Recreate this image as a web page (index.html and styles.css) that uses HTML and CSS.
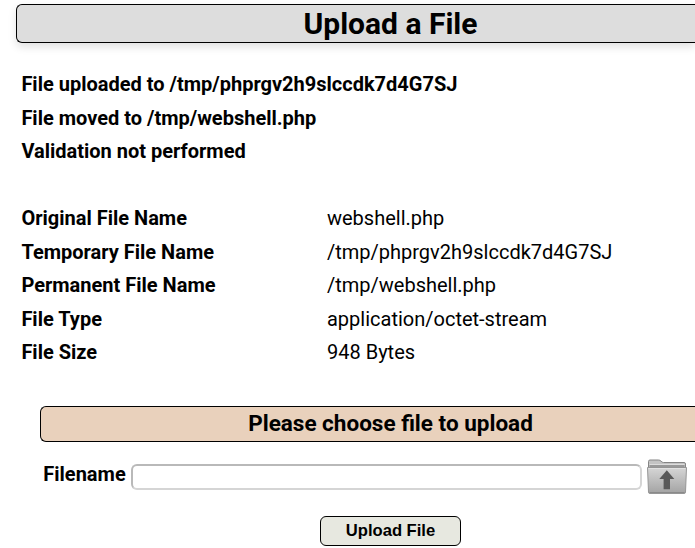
FILE: index.html
```html
<!DOCTYPE html>
<html lang="en">
<head>
<meta charset="utf-8">
<title>Upload a File</title>
<link rel="stylesheet" href="styles.css">
</head>
<body>
<main class="page">
  <h1 class="page-title">Upload a File</h1>
  <section class="messages">
    <p>File uploaded to /tmp/phprgv2h9slccdk7d4G7SJ</p>
    <p>File moved to /tmp/webshell.php</p>
    <p>Validation not performed</p>
  </section>
  <dl class="details">
    <dt>Original File Name</dt><dd>webshell.php</dd>
    <dt>Temporary File Name</dt><dd>/tmp/phprgv2h9slccdk7d4G7SJ</dd>
    <dt>Permanent File Name</dt><dd>/tmp/webshell.php</dd>
    <dt>File Type</dt><dd>application/octet-stream</dd>
    <dt>File Size</dt><dd>948 Bytes</dd>
  </dl>
  <form class="upload">
    <h2 class="form-title">Please choose file to upload</h2>
    <div class="file-row">
      <label for="filename">Filename</label>
      <input id="filename" class="filename" type="text">
      <svg class="folder" viewBox="0 0 42 38" aria-hidden="true">
        <defs>
          <linearGradient id="front" x1="0" y1="0" x2="0" y2="1">
            <stop offset="0" stop-color="#d6d6d6"/>
            <stop offset="1" stop-color="#a3a3a3"/>
          </linearGradient>
        </defs>
        <path d="M2.500 10V3.500Q2.500 2 4 2H12.500Q14 2 15 3.200T17.500 4.500H38Q39.500 4.500 39.500 6V10Z" fill="#c4c4c4" stroke="#858585"/>
        <path d="M3.500 8H38.500" stroke="#6f6f6f"/>
        <path d="M3.500 6.500H38.500" stroke="#ddd"/>
        <path d="M1.500 9.500H40.500L39.500 34Q39.500 35.500 38 35.500H4Q2.500 35.500 2.500 34Z" fill="url(#front)" stroke="#969696"/>
        <path d="M2.500 10.500H39.500" stroke="#e2e2e2"/>
        <path d="M3.500 34.500H38.500" stroke="#8a8a8a"/>
        <path d="M20.800 12.300L28.300 21H24V31.300H17.600V21H13.300Z" fill="#595959"/>
      </svg>
    </div>
    <button class="submit" type="button">Upload File</button>
  </form>
</main>
</body>
</html>
```
FILE: styles.css
```css
* { box-sizing: border-box; }
body {
  margin: 0;
  background: #fff;
  color: #000;
  font-family: Roboto, sans-serif;
  font-size: 20px;
}
.page {
  width: 695px;
  padding: 4px 0 0 16px;
}
.page-title {
  height: 39px;
  margin: 0;
  padding-left: 69px;
  border: 1px solid #000;
  border-right: 0;
  border-radius: 6px 0 0 6px;
  background: #ddd;
  box-shadow: 0 4px 8px rgba(0, 0, 0, 0.12);
  font-size: 30px;
  font-weight: 700;
  line-height: 37px;
  text-align: center;
}
.messages {
  margin-top: 25px;
  padding-left: 5.4px;
  font-weight: 700;
  line-height: 33.5px;
}
.messages p { margin: 0; }
.details {
  display: grid;
  grid-template-columns: 305.6px 1fr;
  margin: 33.5px 0 0;
  padding-left: 5.4px;
  line-height: 33.5px;
}
.details dt { font-weight: 700; }
.details dd { margin: 0; }
.upload {
  margin: 36px 0 0 24px;
}
.form-title {
  height: 36px;
  margin: 0;
  padding-left: 45px;
  border: 1px solid #000;
  border-right: 0;
  border-radius: 6px 0 0 6px;
  background: #e9d1bc;
  font-size: 22.5px;
  font-weight: 700;
  line-height: 32px;
  text-align: center;
}
.file-row {
  display: flex;
  align-items: center;
  height: 38px;
  margin-top: 16px;
  padding-left: 3px;
}
.file-row label {
  width: 88px;
  padding-left: 0.3px;
  font-weight: 700;
  line-height: 24px;
  margin-top: -5px;
}
.filename {
  width: 511px;
  height: 26px;
  margin-top: 1px;
  border: 2px solid;
  border-color: #b9b9b9 #d5d5d5 #d5d5d5 #b9b9b9;
  border-radius: 6px;
  background: #fff;
}
.folder {
  width: 42px;
  height: 38px;
  margin-left: 4px;
}
.submit {
  display: block;
  width: 141px;
  height: 30px;
  margin: 20px 0 0 280px;
  padding: 0;
  border: 1px solid #000;
  border-radius: 6px;
  background: #e7e8e0;
  color: #000;
  font: 700 16.6px "Liberation Sans", Arial, sans-serif;
}
```
